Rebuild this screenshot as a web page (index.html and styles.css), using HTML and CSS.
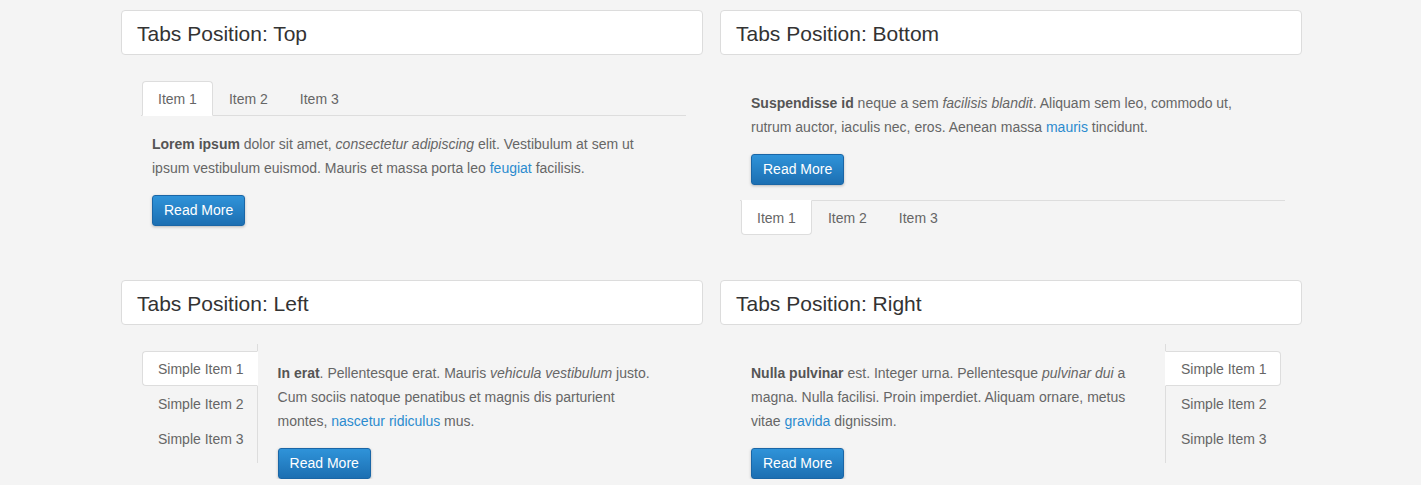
FILE: index.html
```html
<!DOCTYPE html>
<html lang="en">
<head>
<meta charset="utf-8">
<title>Tabs Positions</title>
<link rel="stylesheet" href="styles.css">
</head>
<body>
<div class="container">
  <section class="panel">
    <h2 class="panel-title">Tabs Position: Top</h2>
    <div class="demo demo-top">
      <ul class="tabs tabs-h tabs-top">
        <li class="active"><a>Item 1</a></li>
        <li><a>Item 2</a></li>
        <li><a>Item 3</a></li>
      </ul>
      <div class="tab-content">
        <p><b>Lorem ipsum</b> dolor sit amet, <i>consectetur adipiscing</i> elit. Vestibulum at sem ut<br>ipsum vestibulum euismod. Mauris et massa porta leo <a class="link">feugiat</a> facilisis.</p>
        <button class="btn">Read More</button>
      </div>
    </div>
  </section>

  <section class="panel">
    <h2 class="panel-title">Tabs Position: Bottom</h2>
    <div class="demo demo-bottom">
      <div class="tab-content">
        <p><b>Suspendisse id</b> neque a sem <i>facilisis blandit</i>. Aliquam sem leo, commodo ut,<br>rutrum auctor, iaculis nec, eros. Aenean massa <a class="link">mauris</a> tincidunt.</p>
        <button class="btn">Read More</button>
      </div>
      <ul class="tabs tabs-h tabs-bottom">
        <li class="active"><a>Item 1</a></li>
        <li><a>Item 2</a></li>
        <li><a>Item 3</a></li>
      </ul>
    </div>
  </section>

  <section class="panel">
    <h2 class="panel-title">Tabs Position: Left</h2>
    <div class="demo demo-side">
      <ul class="tabs tabs-v tabs-left">
        <li class="active"><a>Simple Item 1</a></li>
        <li><a>Simple Item 2</a></li>
        <li><a>Simple Item 3</a></li>
      </ul>
      <div class="tab-content side-content left-content">
        <p><b>In erat</b>. Pellentesque erat. Mauris <i>vehicula vestibulum</i> justo.<br>Cum sociis natoque penatibus et magnis dis parturient<br>montes, <a class="link">nascetur ridiculus</a> mus.</p>
        <button class="btn">Read More</button>
      </div>
    </div>
  </section>

  <section class="panel">
    <h2 class="panel-title">Tabs Position: Right</h2>
    <div class="demo demo-side">
      <div class="tab-content side-content right-content">
        <p><b>Nulla pulvinar</b> est. Integer urna. Pellentesque <i>pulvinar dui</i> a<br>magna. Nulla facilisi. Proin imperdiet. Aliquam ornare, metus<br>vitae <a class="link">gravida</a> dignissim.</p>
        <button class="btn">Read More</button>
      </div>
      <ul class="tabs tabs-v tabs-right">
        <li class="active"><a>Simple Item 1</a></li>
        <li><a>Simple Item 2</a></li>
        <li><a>Simple Item 3</a></li>
      </ul>
    </div>
  </section>
</div>
</body>
</html>
```

FILE: styles.css
```css
html, body {
  margin: 0;
  padding: 0;
  background: #f4f4f4;
  overflow: hidden;
}

body {
  font-family: "Liberation Sans", Arial, sans-serif;
  font-size: 14px;
  color: #666;
}

.container {
  width: 1181px;
  margin: 10px 0 0 121px;
  display: grid;
  grid-template-columns: 582px 582px;
  column-gap: 17px;
  row-gap: 45px;
  align-items: start;
}

.panel-title {
  margin: 0;
  background: #fff;
  border: 1px solid #dcdcdc;
  border-radius: 4px;
  padding: 12px 15px 9px;
  font-size: 21px;
  line-height: 22px;
  font-weight: normal;
  color: #333;
}

.demo {
  margin: 26px 17px 0 20px;
}

.tabs {
  list-style: none;
  margin: 0;
  padding: 0;
}

.tabs a {
  display: block;
  color: #666;
  line-height: 17px;
  padding: 9px 15px 7px;
  border: 1px solid transparent;
  cursor: pointer;
}

.tabs li.active a {
  background: #fff;
  border-color: #ddd;
}

/* horizontal tabs */
.tabs-h {
  display: flex;
  padding-left: 1px;
}

.tabs-top {
  border-bottom: 1px solid #ddd;
}

.tabs-top li {
  margin-bottom: -1px;
}

.tabs-top li.active a {
  border-bottom-color: #fff;
  border-radius: 4px 4px 0 0;
}

.tabs-bottom {
  border-top: 1px solid #ddd;
}

.tabs-bottom li {
  margin-top: -1px;
}

.tabs-bottom li.active a {
  border-top-color: #fff;
  border-radius: 0 0 4px 4px;
}

.tab-content {
  padding: 16px 10px 0 11px;
}

.demo-bottom .tab-content {
  padding: 10px 10px 15px 11px;
}

.tab-content p {
  margin: 0 0 15px;
  line-height: 24px;
}

.tab-content b {
  color: #555;
}

.link {
  color: #2b8bcf;
  text-decoration: none;
  cursor: pointer;
}

.btn {
  display: inline-block;
  font-family: "Liberation Sans", Arial, sans-serif;
  font-size: 14px;
  line-height: 17px;
  color: #fff;
  padding: 6px 11px;
  border: 1px solid #1a66a6;
  border-radius: 3px;
  background: linear-gradient(to bottom, #2f93d9 0%, #1c6fb2 100%);
  box-shadow: 0 1px 3px rgba(0, 0, 0, 0.25);
  cursor: pointer;
}

/* side tabs */
.demo-side {
  display: flex;
  align-items: flex-start;
  margin-top: 19px;
}

.tabs-v {
  padding: 7px 0;
  flex: none;
}

.tabs-v a {
  white-space: nowrap;
  padding-right: 13px;
}

.tabs-left {
  border-right: 1px solid #ddd;
  padding-left: 1px;
}

.tabs-left li {
  margin-right: -1px;
}

.tabs-left li.active a {
  border-right-color: #fff;
  border-radius: 4px 0 0 4px;
}

.tabs-right {
  border-left: 1px solid #ddd;
  width: 119px;
}

.tabs-right li {
  margin-left: -1px;
  width: fit-content;
}

.tabs-right li.active a {
  border-left-color: #fff;
  border-radius: 0 4px 4px 0;
}

.side-content {
  flex: 1;
  padding-top: 17px;
  padding-bottom: 0;
}

.left-content {
  padding-left: 20px;
}

.right-content {
  padding-left: 11px;
}
```
